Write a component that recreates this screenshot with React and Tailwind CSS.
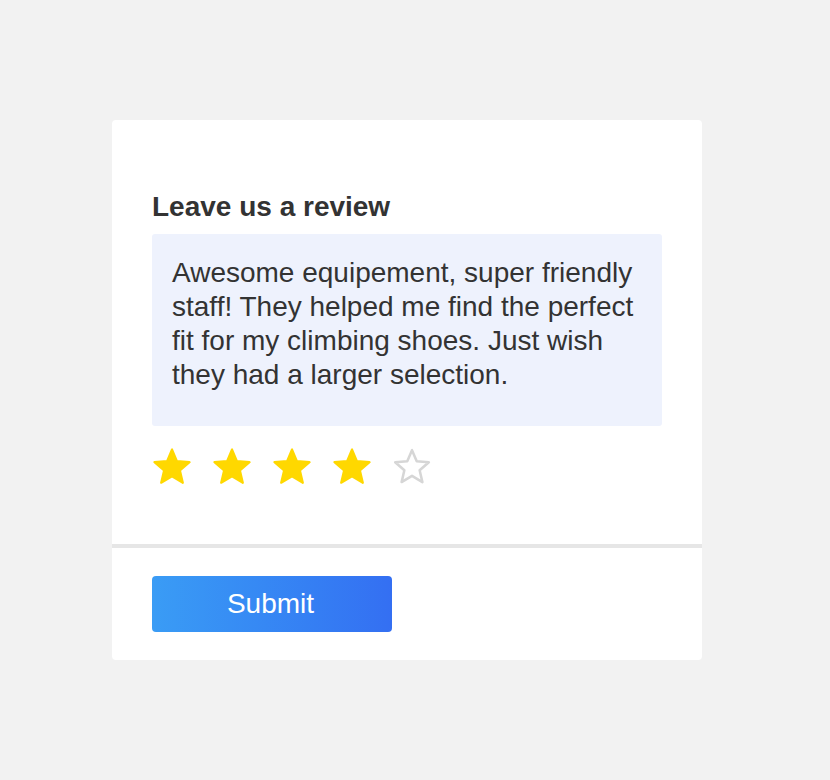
import React from "react";

const STAR =
  "M12 17.27L18.18 21l-1.64-7.03L22 9.24l-7.19-.61L12 2 9.19 8.63 2 9.24l5.46 4.73L5.82 21z";

function Star({ filled }) {
  return (
    <svg
      viewBox="1.5 1.5 21 21"
      className="w-[38px] h-[38px] shrink-0"
      aria-hidden="true"
    >
      {filled ? (
        <path
          d={STAR}
          fill="#ffd800"
          stroke="#ffd800"
          strokeWidth="1.2"
          strokeLinejoin="round"
          transform="translate(12 11.7) scale(0.97) translate(-12 -11.7)"
        />
      ) : (
        <path
          d={STAR}
          fill="none"
          stroke="#d6d6d6"
          strokeWidth="1.5"
          strokeLinejoin="round"
          transform="translate(12 11.7) scale(0.93) translate(-12 -11.7)"
        />
      )}
    </svg>
  );
}

export default function App() {
  const rating = 4;

  return (
    <div
      className="min-h-screen bg-[#f2f2f2] pt-[120px] pl-[112px] pb-[120px]"
      style={{ fontFamily: '"Liberation Sans", Arial, sans-serif' }}
    >
      <div className="w-[590px] bg-white rounded">
        {/* form */}
        <div className="px-[40px] pt-[70px] pb-[58px] border-b-4 border-[#e6e6e6]">
          <h2 className="text-[28px] leading-[34px] font-bold text-[#333333]">
            Leave us a review
          </h2>
          <div className="mt-[10px] h-[192px] bg-[#eef2fd] rounded-[3px] px-[20px] pt-[22px] text-[28px] leading-[34px] text-[#333333]">
            Awesome equipement, super friendly staff! They helped me find the
            perfect fit for my climbing shoes. Just wish they had a larger
            selection.
          </div>
          <div className="mt-[22px] ml-[1px] flex gap-[22px]">
            {[1, 2, 3, 4, 5].map((n) => (
              <Star key={n} filled={n <= rating} />
            ))}
          </div>
        </div>

        {/* actions */}
        <div className="px-[40px] py-[28px]">
          <button className="w-[240px] h-[56px] pr-[3px] rounded bg-linear-to-r from-[#3a9cf5] to-[#346ff2] text-white text-[28px] leading-none">
            Submit
          </button>
        </div>
      </div>
    </div>
  );
}
